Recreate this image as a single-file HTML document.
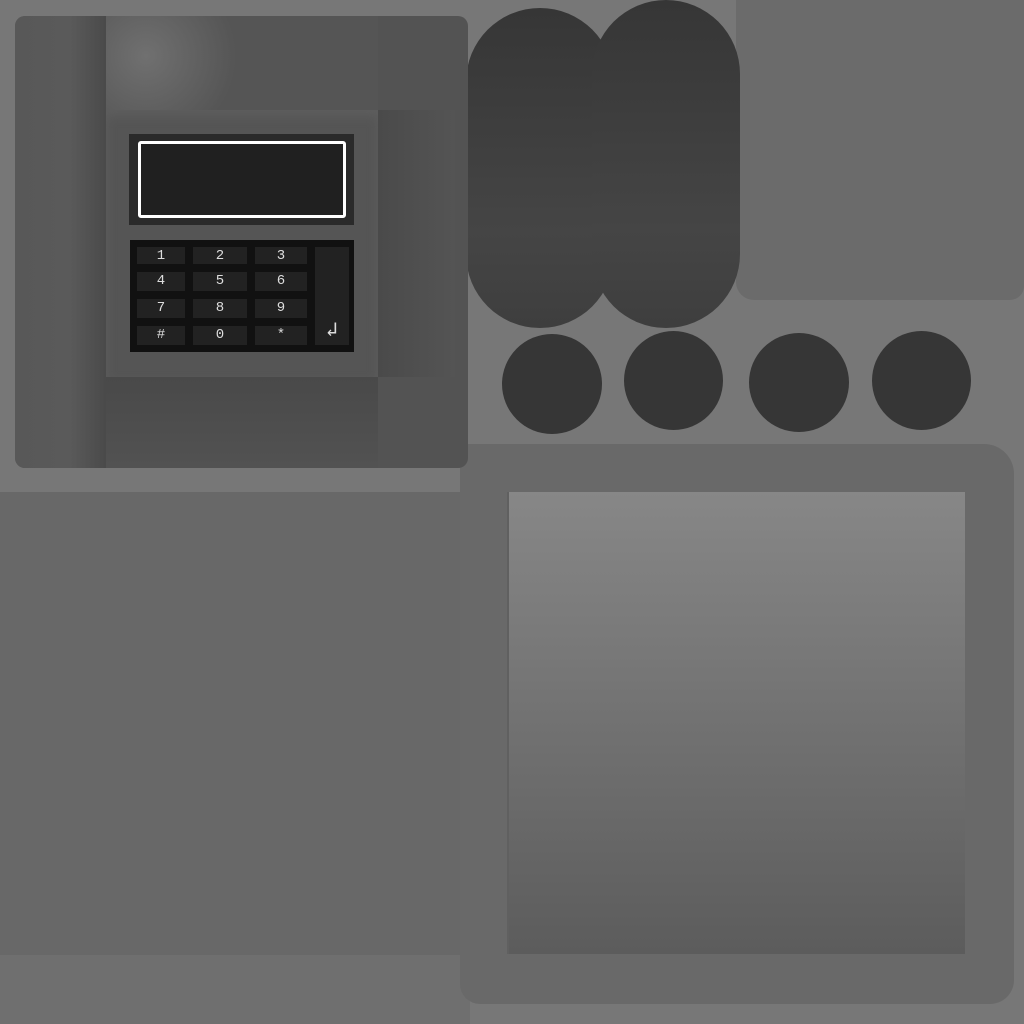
<!DOCTYPE html><html><head><style>
body{margin:0;width:1024px;height:1024px;background:#777;position:relative;overflow:hidden;font-family:"Liberation Mono",monospace}
div{position:absolute;box-sizing:border-box}
.k{background:#222;color:#ddd;font-size:14px;text-align:center;line-height:18px}
</style></head><body>
<div style="left:0;top:492px;width:470px;height:463px;background:#686868"></div>
<div style="left:0;top:955px;width:470px;height:69px;background:#6f6f6f"></div>
<div style="left:460px;top:444px;width:554px;height:560px;background:#696969;border-radius:4px 30px 24px 20px"></div>
<div style="left:507px;top:492px;width:458px;height:462px;background:linear-gradient(#878787,#5c5c5c);border-left:2px solid #606060"></div>
<div style="left:736px;top:0;width:288px;height:300px;background:#6b6b6b;border-radius:0 0 14px 18px"></div>
<div style="left:466px;top:8px;width:148px;height:320px;background:linear-gradient(#363636,#454545 70%,#3e3e3e);border-radius:74px"></div>
<div style="left:592px;top:0;width:148px;height:328px;background:linear-gradient(#363636,#454545 70%,#3e3e3e);border-radius:74px"></div>
<div style="left:502px;top:334px;width:100px;height:100px;background:#363636;border-radius:50%"></div>
<div style="left:624px;top:331px;width:99px;height:99px;background:#363636;border-radius:50%"></div>
<div style="left:749px;top:333px;width:100px;height:99px;background:#363636;border-radius:50%"></div>
<div style="left:872px;top:331px;width:99px;height:99px;background:#363636;border-radius:50%"></div>
<div style="left:15px;top:16px;width:453px;height:452px;background:#535353;border-radius:10px;overflow:hidden">
 <div style="left:0;top:0;width:91px;height:452px;background:linear-gradient(90deg,#585858,#5a5a5a 60%,#4a4a4a)"></div>
 <div style="left:91px;top:0;width:272px;height:95px;background:radial-gradient(circle at 40px 40px,#707070,#555 90px)"></div>
 <div style="left:363px;top:94px;width:77px;height:267px;background:linear-gradient(90deg,#4a4a4a,#545454)"></div>
 <div style="left:91px;top:361px;width:272px;height:91px;background:linear-gradient(#494949,#525252)"></div>
 <div style="left:91px;top:94px;width:272px;height:267px;background:#555;box-shadow:inset 0 6px 10px #5e5e5e"></div>
</div>
<div style="left:129px;top:134px;width:225px;height:91px;background:#2a2a2a"></div>
<div style="left:138px;top:141px;width:208px;height:77px;background:#202020;border:3px solid #fff;border-radius:3px"></div>
<div style="left:130px;top:240px;width:224px;height:112px;background:#111"></div>
<div class="k" style="left:137px;top:247px;width:48px;height:17px">1</div>
<div class="k" style="left:193px;top:247px;width:54px;height:17px">2</div>
<div class="k" style="left:255px;top:247px;width:52px;height:17px">3</div>
<div class="k" style="left:137px;top:272px;width:48px;height:19px">4</div>
<div class="k" style="left:193px;top:272px;width:54px;height:19px">5</div>
<div class="k" style="left:255px;top:272px;width:52px;height:19px">6</div>
<div class="k" style="left:137px;top:299px;width:48px;height:19px">7</div>
<div class="k" style="left:193px;top:299px;width:54px;height:19px">8</div>
<div class="k" style="left:255px;top:299px;width:52px;height:19px">9</div>
<div class="k" style="left:137px;top:326px;width:48px;height:19px">#</div>
<div class="k" style="left:193px;top:326px;width:54px;height:19px">0</div>
<div class="k" style="left:255px;top:326px;width:52px;height:19px">*</div>
<div class="k" style="left:315px;top:247px;width:34px;height:98px;line-height:170px;font-size:20px">↲</div>
</body></html>
